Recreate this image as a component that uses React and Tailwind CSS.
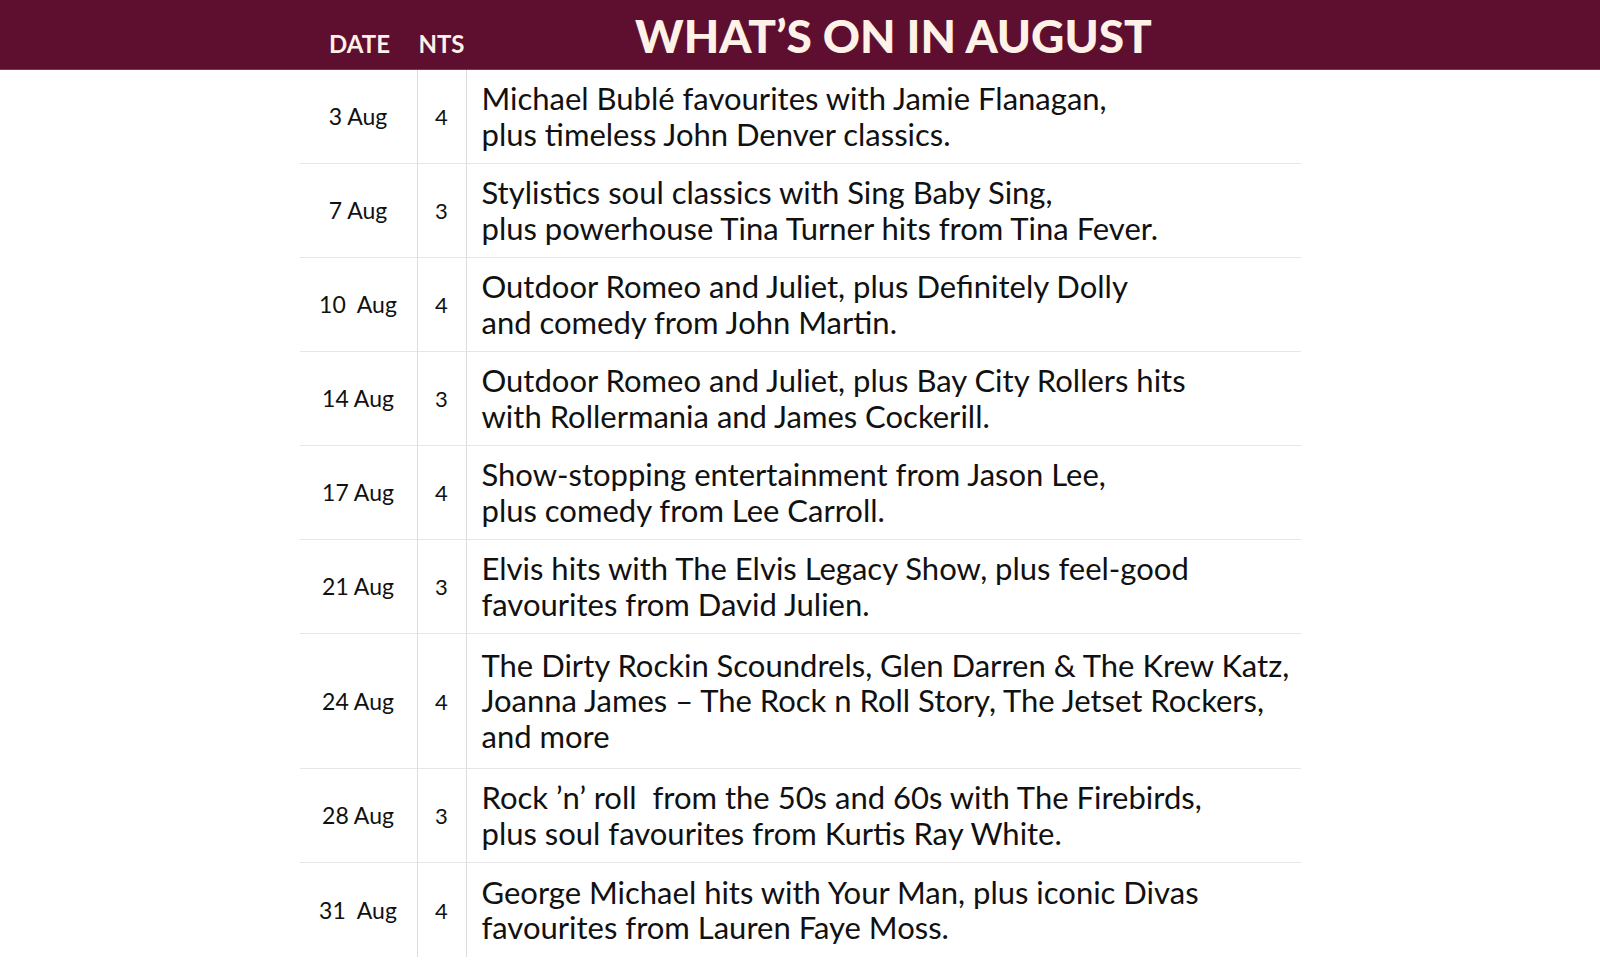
import React from "react";

const rows = [
  { date: "3 Aug", nts: "4", lines: ["Michael Bublé favourites with Jamie Flanagan,", "plus timeless John Denver classics."] },
  { date: "7 Aug", nts: "3", lines: ["Stylistics soul classics with Sing Baby Sing,", "plus powerhouse Tina Turner hits from Tina Fever."] },
  { date: "10  Aug", nts: "4", lines: ["Outdoor Romeo and Juliet, plus Definitely Dolly", "and comedy from John Martin."] },
  { date: "14 Aug", nts: "3", lines: ["Outdoor Romeo and Juliet, plus Bay City Rollers hits", "with Rollermania and James Cockerill."] },
  { date: "17 Aug", nts: "4", lines: ["Show-stopping entertainment from Jason Lee,", "plus comedy from Lee Carroll."] },
  { date: "21 Aug", nts: "3", lines: ["Elvis hits with The Elvis Legacy Show, plus feel-good", "favourites from David Julien."] },
  {
    date: "24 Aug",
    nts: "4",
    tall: true,
    lines: [
      "The Dirty Rockin Scoundrels, Glen Darren & The Krew Katz,",
      "Joanna James – The Rock n Roll Story, The Jetset Rockers,",
      "and more",
    ],
  },
  { date: "28 Aug", nts: "3", lines: ["Rock ’n’ roll  from the 50s and 60s with The Firebirds,", "plus soul favourites from Kurtis Ray White."] },
  { date: "31  Aug", nts: "4", last: true, lines: ["George Michael hits with Your Man, plus iconic Divas", "favourites from Lauren Faye Moss."] },
];

const Row = ({ date, nts, lines, tall, last }) => (
  <div className={`flex ${tall ? "h-[135px]" : "h-[94px]"}`}>
    <div className={`w-[117px] flex items-center justify-center text-[23px] text-[#111] whitespace-pre ${last ? "" : "border-b border-[#e6e6e6]"}`}>
      {date}
    </div>
    <div className={`w-[49px] flex items-center justify-center text-[22px] text-[#111] border-l border-[#dcdcdc] ${last ? "" : "border-b border-b-[#e6e6e6]"}`}>
      {nts}
    </div>
    <div className={`flex-1 flex flex-col justify-center pl-[15px] border-l border-[#dcdcdc] ${last ? "" : "border-b border-b-[#e6e6e6]"}`}>
      {lines.map((l, i) => (
        <p key={i} className="text-[31px] leading-[35.5px] text-[#111] whitespace-pre">
          {l}
        </p>
      ))}
    </div>
  </div>
);

export default function App() {
  return (
    <div className="w-[1600px] h-[967px] bg-white overflow-hidden" style={{ fontFamily: "Lato, 'Noto Sans', sans-serif" }}>
      <div className="h-[70px] bg-[#5e0f30] border-b border-[#7d3a58]">
        <div className="w-[1001px] mx-auto h-full flex items-baseline pt-[14px]">
          <div className="w-[117px] text-center text-[24px] font-bold text-[#fdf1e8] pl-[3px]">DATE</div>
          <div className="w-[50px] text-center text-[24px] font-bold text-[#fdf1e8]">NTS</div>
          <div className="flex-1 text-center pl-[20px] text-[46px] leading-[44px] font-black text-[#fdf1e8]">
            WHAT’S ON IN AUGUST
          </div>
        </div>
      </div>
      <div className="w-[1001px] mx-auto">
        {rows.map((r) => (
          <Row key={r.date} {...r} />
        ))}
      </div>
    </div>
  );
}
